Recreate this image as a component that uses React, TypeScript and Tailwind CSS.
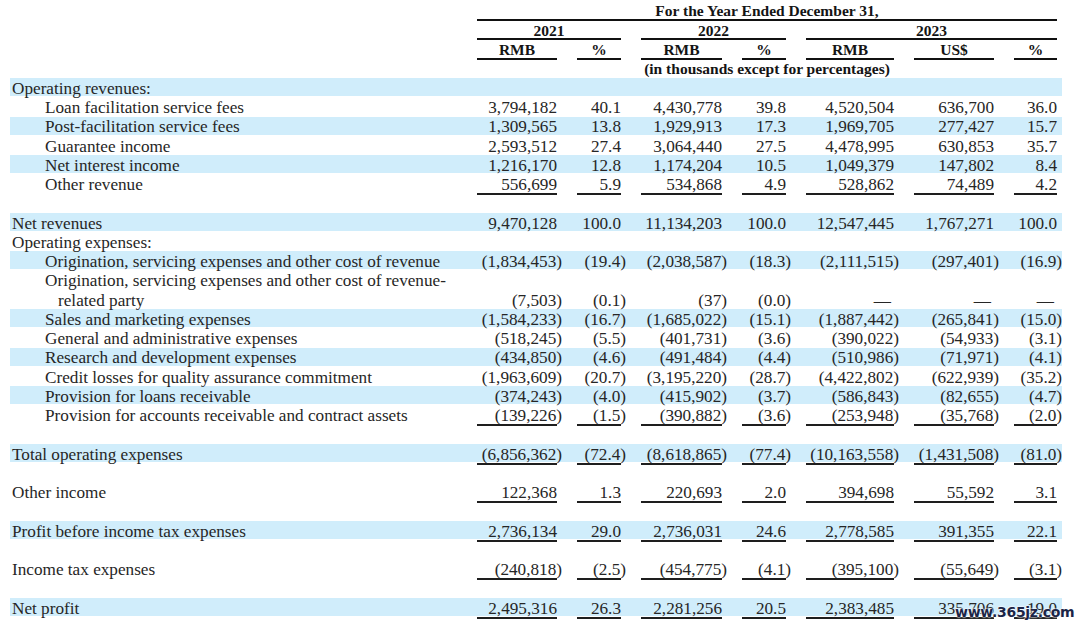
import React from "react";

type Row = {
  label?: string;
  indent?: 0 | 1 | 2;
  band?: boolean;
  values?: string[];
  underline?: boolean;
};

const rows: Row[] = [
  { label: "Operating revenues:", indent: 0, band: true },
  { label: "Loan facilitation service fees", indent: 1, values: ["3,794,182", "40.1", "4,430,778", "39.8", "4,520,504", "636,700", "36.0"] },
  { label: "Post-facilitation service fees", indent: 1, band: true, values: ["1,309,565", "13.8", "1,929,913", "17.3", "1,969,705", "277,427", "15.7"] },
  { label: "Guarantee income", indent: 1, values: ["2,593,512", "27.4", "3,064,440", "27.5", "4,478,995", "630,853", "35.7"] },
  { label: "Net interest income", indent: 1, band: true, values: ["1,216,170", "12.8", "1,174,204", "10.5", "1,049,379", "147,802", "8.4"] },
  { label: "Other revenue", indent: 1, underline: true, values: ["556,699", "5.9", "534,868", "4.9", "528,862", "74,489", "4.2"] },
  {},
  { label: "Net revenues", indent: 0, band: true, values: ["9,470,128", "100.0", "11,134,203", "100.0", "12,547,445", "1,767,271", "100.0"] },
  { label: "Operating expenses:", indent: 0 },
  { label: "Origination, servicing expenses and other cost of revenue", indent: 1, band: true, values: ["(1,834,453)", "(19.4)", "(2,038,587)", "(18.3)", "(2,111,515)", "(297,401)", "(16.9)"] },
  { label: "Origination, servicing expenses and other cost of revenue-", indent: 1 },
  { label: "related party", indent: 2, values: ["(7,503)", "(0.1)", "(37)", "(0.0)", "—", "—", "—"] },
  { label: "Sales and marketing expenses", indent: 1, band: true, values: ["(1,584,233)", "(16.7)", "(1,685,022)", "(15.1)", "(1,887,442)", "(265,841)", "(15.0)"] },
  { label: "General and administrative expenses", indent: 1, values: ["(518,245)", "(5.5)", "(401,731)", "(3.6)", "(390,022)", "(54,933)", "(3.1)"] },
  { label: "Research and development expenses", indent: 1, band: true, values: ["(434,850)", "(4.6)", "(491,484)", "(4.4)", "(510,986)", "(71,971)", "(4.1)"] },
  { label: "Credit losses for quality assurance commitment", indent: 1, values: ["(1,963,609)", "(20.7)", "(3,195,220)", "(28.7)", "(4,422,802)", "(622,939)", "(35.2)"] },
  { label: "Provision for loans receivable", indent: 1, band: true, values: ["(374,243)", "(4.0)", "(415,902)", "(3.7)", "(586,843)", "(82,655)", "(4.7)"] },
  { label: "Provision for accounts receivable and contract assets", indent: 1, underline: true, values: ["(139,226)", "(1.5)", "(390,882)", "(3.6)", "(253,948)", "(35,768)", "(2.0)"] },
  {},
  { label: "Total operating expenses", indent: 0, band: true, underline: true, values: ["(6,856,362)", "(72.4)", "(8,618,865)", "(77.4)", "(10,163,558)", "(1,431,508)", "(81.0)"] },
  {},
  { label: "Other income", indent: 0, underline: true, values: ["122,368", "1.3", "220,693", "2.0", "394,698", "55,592", "3.1"] },
  {},
  { label: "Profit before income tax expenses", indent: 0, band: true, underline: true, values: ["2,736,134", "29.0", "2,736,031", "24.6", "2,778,585", "391,355", "22.1"] },
  {},
  { label: "Income tax expenses", indent: 0, underline: true, values: ["(240,818)", "(2.5)", "(454,775)", "(4.1)", "(395,100)", "(55,649)", "(3.1)"] },
  {},
  { label: "Net profit", indent: 0, band: true, underline: true, values: ["2,495,316", "26.3", "2,281,256", "20.5", "2,383,485", "335,706", "19.0"] },
];

const GRID =
  "grid grid-cols-[447px_80px_44px_81px_44px_88px_80px_43px] gap-x-5 items-start pr-[5px] h-[18px] mb-[1.26px]";

function Val({ v, u }: { v: string; u?: boolean }) {
  const neg = v.endsWith(")");
  return (
    <div
      className={`flex items-center justify-end whitespace-nowrap pt-[2px] ${
        u ? "h-[21px] border-b-2 border-[#1e1e1e]" : "h-[19px]"
      }`}
    >
      {v === "—" ? (
        <span className="pr-[3px]">—</span>
      ) : neg ? (
        <span className="-mr-[5px]">{v}</span>
      ) : (
        <span>{v}</span>
      )}
    </div>
  );
}

function BodyRow({ r }: { r: Row }) {
  const pad =
    r.indent === 2 ? "pl-[48px]" : r.indent === 1 ? "pl-[35px]" : "pl-[2px]";
  return (
    <div className={`${GRID} ${r.band ? "bg-[#d0edfb]" : ""}`}>
      <div className={`flex h-[19px] items-center whitespace-nowrap pt-[2px] ${pad}`}>
        {r.label ?? ""}
      </div>
      {r.values
        ? r.values.map((v, i) => <Val key={i} v={v} u={r.underline} />)
        : null}
    </div>
  );
}

function HCell({
  children,
  span,
  line = true,
}: {
  children: React.ReactNode;
  span: string;
  line?: boolean;
}) {
  return (
    <div
      className={`${span} flex items-center justify-center whitespace-nowrap pt-[2px] ${
        line ? "h-[20px] border-b-2 border-[#111]" : "h-[18px]"
      }`}
    >
      {children}
    </div>
  );
}

export default function App() {
  return (
    <div className="relative h-[629px] w-[1080px] overflow-hidden bg-white pt-[1px] font-['Liberation_Serif','Times_New_Roman',serif] text-[#262626]">
      <div className="ml-[10px] w-[1052px]">
        <div className="text-[15.5px] font-bold leading-none text-[#141414]">
          <div className={GRID}>
            <div />
            <HCell span="col-[2/9]">For the Year Ended December 31,</HCell>
          </div>
          <div className={GRID}>
            <div />
            <HCell span="col-[2/4]">2021</HCell>
            <HCell span="col-[4/6]">2022</HCell>
            <HCell span="col-[6/9]">2023</HCell>
          </div>
          <div className={GRID}>
            <div />
            <HCell span="col-[2/3]">RMB</HCell>
            <HCell span="col-[3/4]">%</HCell>
            <HCell span="col-[4/5]">RMB</HCell>
            <HCell span="col-[5/6]">%</HCell>
            <HCell span="col-[6/7]">RMB</HCell>
            <HCell span="col-[7/8]">US$</HCell>
            <HCell span="col-[8/9]">%</HCell>
          </div>
          <div className={GRID}>
            <div />
            <HCell span="col-[2/9]" line={false}>
              (in thousands except for percentages)
            </HCell>
          </div>
        </div>
        <div className="text-[17.2px] leading-none">
          {rows.map((r, i) => (
            <BodyRow key={i} r={r} />
          ))}
        </div>
      </div>
      <div className="absolute left-[955px] top-[605px] font-['DejaVu_Sans',sans-serif] text-[14px] font-bold leading-none tracking-[-0.3px] text-[#1b2547] [text-shadow:0_0_2px_#fff,0_0_2px_#fff,0_0_1px_#fff]">
        www.365jz.com
      </div>
    </div>
  );
}
